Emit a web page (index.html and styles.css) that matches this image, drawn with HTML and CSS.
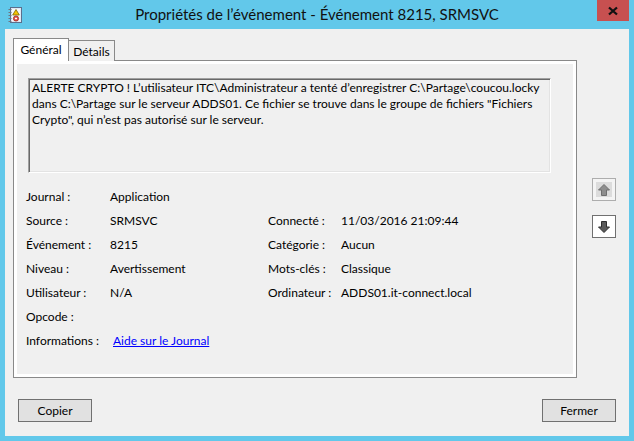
FILE: index.html
```html
<!DOCTYPE html>
<html lang="fr">
<head>
  <meta charset="UTF-8" />
  <meta name="viewport" content="width=device-width, initial-scale=1.0"/>
  <title>Propriétés de l’événement</title>
  <link rel="stylesheet" href="styles.css">
</head>
<body>
  <div class="window">
    <div class="titlebar">
      <svg class="app-icon" width="16" height="16" viewBox="0 0 16 16">
        <rect x="3.5" y="0.5" width="11" height="15" fill="#dfe9f5" stroke="#5b6f8c"/>
        <rect x="5" y="2" width="8" height="12" fill="#f4f8fc"/>
        <g fill="none" stroke="#6d7480" stroke-width="1">
          <path d="M1.5 2.5h3M1.5 5.5h3M1.5 8.5h3M1.5 11.5h3M1.5 14.5h3"/>
        </g>
        <path d="M9 2.5l3.3 5.5h-6.6z" fill="#f5c400" stroke="#7a6200" stroke-width="0.8"/>
        <circle cx="9" cy="11.5" r="2.6" fill="#e0524a" stroke="#9c2a24" stroke-width="0.8"/>
        <rect x="8" y="10.8" width="2" height="1.4" fill="#fff"/>
      </svg>
      <div class="title">Propriétés de l’événement - Événement 8215, SRMSVC</div>
      <div class="close">
        <svg width="12" height="10" viewBox="0 0 12 10">
          <path d="M2 1.5l8 7M10 1.5l-8 7" stroke="#111" stroke-width="2.3"/>
        </svg>
      </div>
    </div>

    <div class="client">
      <div class="main">
        <div class="tabctl">
          <div class="tabs">
            <div class="tab active">Général</div>
            <div class="tab">Détails</div>
          </div>
          <div class="panel">
            <div class="page">
              <div class="desc">
                <div class="line">ALERTE CRYPTO ! L’utilisateur ITC\Administrateur a tenté d’enregistrer C:\Partage\coucou.locky</div>
                <div class="line">dans C:\Partage sur le serveur ADDS01. Ce fichier se trouve dans le groupe de fichiers "Fichiers</div>
                <div class="line">Crypto", qui n’est pas autorisé sur le serveur.</div>
              </div>

              <div class="fields">
                <div class="lbl">Journal :</div><div class="val">Application</div><div></div><div></div>
                <div class="lbl">Source :</div><div class="val">SRMSVC</div><div class="lbl">Connecté :</div><div class="val">11/03/2016 21:09:44</div>
                <div class="lbl">Événement :</div><div class="val">8215</div><div class="lbl">Catégorie :</div><div class="val">Aucun</div>
                <div class="lbl">Niveau :</div><div class="val">Avertissement</div><div class="lbl">Mots-clés :</div><div class="val">Classique</div>
                <div class="lbl">Utilisateur :</div><div class="val">N/A</div><div class="lbl">Ordinateur :</div><div class="val">ADDS01.it-connect.local</div>
                <div class="lbl">Opcode :</div><div class="val"></div><div></div><div></div>
                <div class="lbl">Informations :</div><div class="val"><a class="link" href="#">Aide sur le Journal</a></div><div></div><div></div>
              </div>
            </div>
          </div>
        </div>

        <div class="nav">
          <button class="arrow" disabled>
            <svg width="16" height="16" viewBox="0 0 16 16">
              <path d="M8 2.5l5.5 5.5h-3v5.5h-5v-5.5h-3z" fill="#8e8e8e" stroke="#6f6f6f"/>
            </svg>
          </button>
          <button class="arrow">
            <svg width="16" height="16" viewBox="0 0 16 16">
              <path d="M8 13.5l5.5-5.5h-3v-5.5h-5v5.5h-3z" fill="#5a5a5a" stroke="#2e2e2e"/>
            </svg>
          </button>
        </div>
      </div>

      <div class="footer">
        <button class="btn">Copier</button>
        <button class="btn">Fermer</button>
      </div>
    </div>
  </div>
</body>
</html>
```

FILE: styles.css
```css
body {
  margin: 0;
  font-family: Lato, "Noto Sans", sans-serif;
  font-size: 12px;
  color: #000;
}
.window {
  width: 634px;
  height: 441px;
  background: #62c8ea;
  padding: 0 5px 5px;
  box-sizing: border-box;
  display: flex;
  flex-direction: column;
}
.titlebar {
  height: 29px;
  display: grid;
  grid-template-columns: 1fr auto 1fr;
  align-items: start;
}
.app-icon {
  margin: 7px 0 0 2px;
}
.title {
  font-size: 15px;
  color: #111;
  margin-top: 5px;
}
.close {
  justify-self: end;
  width: 32px;
  height: 21px;
  background: #c75050;
  display: flex;
  align-items: center;
  justify-content: center;
}
.client {
  flex: 1;
  background: #f0f0f0;
  padding: 9px 13px 0 8px;
  display: flex;
  flex-direction: column;
}
.main {
  display: flex;
}
.tabctl {
  width: 564px;
}
.tabs {
  display: flex;
  align-items: flex-end;
  margin-bottom: -1px;
}
.tab {
  width: 45px;
  height: 20px;
  border: 1px solid #898989;
  border-bottom: none;
  line-height: 21px;
  text-align: center;
  background: #f0f0f0;
}
.tab + .tab {
  margin-left: -1px;
}
.tab.active {
  width: 54px;
  height: 22px;
  line-height: 21px;
  background: #fff;
  position: relative;
  z-index: 1;
}
.panel {
  height: 310px;
  border: 1px solid #898989;
  background: #fff;
  padding: 3px;
}
.page {
  height: 100%;
  background: #f0f0f0;
  padding: 14px 22px 0 9px;
  box-sizing: border-box;
}
.desc {
  height: 91px;
  margin: 0 0 12px 2px;
  border-top: 1px solid #a0a0a0;
  border-left: 1px solid #a0a0a0;
  border-right: 1px solid #fff;
  border-bottom: 1px solid #fff;
  box-shadow: inset 1px 1px 0 #696969, inset -1px -1px 0 #e3e3e3;
  padding: 1px 3px;
  line-height: 16px;
}
.line {
  white-space: nowrap;
}
.fields {
  display: grid;
  grid-template-columns: 84px 158px 73px 1fr;
  grid-auto-rows: 24px;
  line-height: 24px;
}
.link {
  color: #0000ff;
  margin-left: 3px;
}
.nav {
  margin-left: 15px;
  padding-top: 140px;
  display: flex;
  flex-direction: column;
  gap: 14px;
}
.arrow {
  width: 24px;
  height: 23px;
  padding: 0;
  border: 1px solid #707070;
  background: #fff;
  display: flex;
  align-items: center;
  justify-content: center;
}
.arrow:disabled {
  border-color: #adadad;
  background: #dcdcdc;
  box-shadow: inset 0 0 0 3px #f4f4f4;
}
.footer {
  margin-top: 21px;
  padding-left: 5px;
  display: flex;
  justify-content: space-between;
}
.btn {
  width: 74px;
  height: 23px;
  padding: 0;
  font: inherit;
  background: #e1e1e1;
  border: 1px solid #707070;
}
```
